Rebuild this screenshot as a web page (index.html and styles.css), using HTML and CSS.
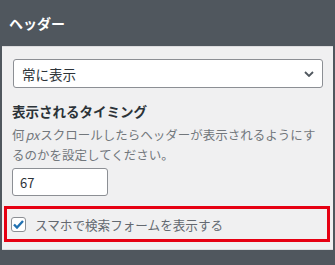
FILE: index.html
```html
<!doctype html>
<html>

<head>
    <meta charset="utf-8">
    <title>ヘッダー</title>
    <link rel="stylesheet" href="styles.css">
</head>

<body>
    <div class="section">
        <h3 class="section-title">ヘッダー</h3>

        <div class="panel">
            <div class="control">
                <div class="select-wrap">
                    <select class="select">
                        <option>常に表示</option>
                        <option>スクロールで表示</option>
                    </select>
                    <svg class="select-arrow" width="10" height="6" viewBox="0 0 10 6">
                        <path d="M1 1 L5 5 L9 1" fill="none" stroke="#50575e" stroke-width="1.8" />
                    </svg>
                </div>
            </div>

            <div class="control">
                <span class="control-title">表示されるタイミング</span>
                <span class="control-desc">何<i>px</i>スクロールしたらヘッダーが表示されるようにするのかを設定してください。</span>
                <input type="text" class="number" value="67" />
            </div>

            <div class="control highlight">
                <label class="check">
                    <input type="checkbox" checked />
                    <span class="checkmark">
                        <svg width="11" height="9" viewBox="0 0 11 9">
                            <path d="M1 4.5 L4 7.5 L10 1" fill="none" stroke="#2271b1" stroke-width="2.4" />
                        </svg>
                    </span>
                    スマホで検索フォームを表示する
                </label>
            </div>
        </div>
    </div>
</body>

</html>
```

FILE: styles.css
```css
* {
    box-sizing: border-box;
}

body {
    margin: 0;
    width: 335px;
    height: 265px;
    background: #50575e;
    font-family: "Noto Sans CJK JP", sans-serif;
    overflow: hidden;
}

.section-title {
    margin: 0;
    height: 46px;
    padding-left: 9px;
    display: flex;
    align-items: center;
    color: #fff;
    font-size: 14px;
    font-weight: 700;
}

.panel {
    margin: 0 2px;
    height: 204px;
    background: #f0f0f1;
    border-top: 1px solid #dcdcde;
    border-bottom: 1px solid #dcdcde;
    padding-top: 12px;
}

.control {
    padding: 0 10px;
}

.select-wrap {
    position: relative;
    margin-left: 1px;
    width: 310px;
}

.select {
    appearance: none;
    -webkit-appearance: none;
    display: block;
    width: 100%;
    height: 29px;
    padding: 0 24px 0 8px;
    border: 1px solid #8c8f94;
    border-radius: 3px;
    background: #fff;
    color: #2c3338;
    font: inherit;
    font-size: 13.5px;
}

.select-arrow {
    position: absolute;
    right: 9px;
    top: 12px;
}

.control-title {
    display: block;
    margin-top: 13px;
    color: #2c3338;
    font-size: 13.5px;
    font-weight: 700;
    line-height: 20px;
}

.control-desc {
    display: block;
    margin-top: 4px;
    color: #72777c;
    font-size: 12.5px;
    line-height: 20px;
}

.control-desc i {
    display: inline-block;
    padding: 0 1px;
}

.number {
    display: block;
    margin-top: 3px;
    width: 96px;
    height: 28px;
    padding: 0 7px;
    border: 1px solid #8c8f94;
    border-radius: 3px;
    background: #fff;
    color: #2c3338;
    font: inherit;
    font-size: 13px;
}

.highlight {
    margin: 10px 3px 0 2px;
    height: 36px;
    border: 3px solid #e60012;
    padding: 0 0 0 4px;
    display: flex;
    align-items: center;
}

.check {
    display: flex;
    align-items: center;
    gap: 9px;
    color: #646970;
    font-size: 12.6px;
}

.check input {
    display: none;
}

.checkmark {
    width: 15px;
    height: 15px;
    border: 1px solid #8c8f94;
    border-radius: 3px;
    background: #fff;
    display: flex;
    align-items: center;
    justify-content: center;
}
```
